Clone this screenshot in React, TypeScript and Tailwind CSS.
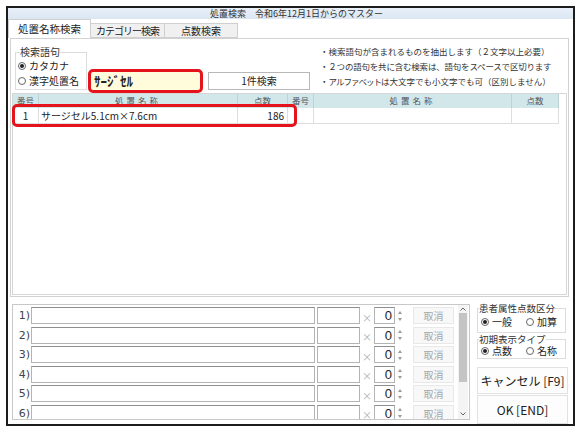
import React from 'react'

const jp = "font-['Noto_Sans_CJK_JP','Noto_Sans',sans-serif]"

function Radio({ checked, label }: { checked?: boolean; label: string }) {
  return (
    <span className="flex items-center gap-[3px]">
      <span className="w-[8px] h-[8px] rounded-full border border-[#666] bg-white flex items-center justify-center">
        {checked && <span className="w-[4px] h-[4px] rounded-full bg-[#222]" />}
      </span>
      <span>{label}</span>
    </span>
  )
}

function Spinner() {
  return (
    <div className="w-[10px] h-full flex flex-col items-center justify-center gap-[4px]">
      <svg width="4" height="3" viewBox="0 0 4 3"><path d="M0 3 L2 0 L4 3 Z" fill="#9a9a9a" /></svg>
      <svg width="4" height="3" viewBox="0 0 4 3"><path d="M0 0 L4 0 L2 3 Z" fill="#9a9a9a" /></svg>
    </div>
  )
}

function ListRow({ n }: { n: number }) {
  return (
    <div className="flex items-center h-[17px] shrink-0">
      <span className="w-[18px] text-right pr-[1px] text-[11px] leading-[17px] text-[#444] font-['DejaVu_Sans',sans-serif]">{n})</span>
      <div className="w-[284px] h-full border border-[#b4b4b4] border-t-[#8e8e8e] bg-white" />
      <div className="ml-[2px] w-[43px] h-full border border-[#b4b4b4] border-t-[#8e8e8e] bg-white" />
      <span className="w-[14px] text-center text-[10px] leading-[17px] text-[#b0b0b0] pt-[3px]">×</span>
      <div className="w-[21px] h-full border border-[#b4b4b4] border-t-[#8e8e8e] bg-white text-right pr-[2px] text-[13px] leading-[15px] text-[#222] font-['Liberation_Sans',sans-serif]">0</div>
      <Spinner />
      <div className="ml-[8px] w-[41px] h-full border border-[#e8e8e8] bg-[#f8f8f8] text-center text-[10px] leading-[15px] text-[#a8a8a8]">取消</div>
    </div>
  )
}

export default function App() {
  return (
    <div className={`w-[581px] h-[433px] bg-white pl-[6px] pt-[6px] ${jp}`}>
      <div className="w-[569px] h-[420px] border-2 border-[#1c1c1c] flex flex-col bg-white overflow-hidden">
        {/* title bar */}
        <div className="h-[11px] shrink-0 bg-gradient-to-b from-[#e9f0f9] to-[#dae6f2] text-center text-[9px] leading-[11px] text-[#333] pl-[12px]">
          処置検索　令和6年12月1日からのマスター
        </div>

        {/* tabs */}
        <div className="h-[19px] shrink-0 flex items-end bg-white">
          <div className="w-[83px] h-[19px] border border-b-0 border-[#cfcfcf] bg-white text-center text-[10.5px] leading-[18px] text-[#222]">処置名称検索</div>
          <div className="w-[74px] h-[15px] border border-l-0 border-[#cfcfcf] bg-[#f0f0f0] text-center text-[10px] leading-[14px] tracking-[-1px] text-[#222]">カテゴリー検索</div>
          <div className="w-[73px] h-[15px] border border-l-0 border-[#cfcfcf] bg-[#f0f0f0] text-center text-[10px] leading-[14px] text-[#222]">点数検索</div>
        </div>

        {/* tab panel */}
        <div className="ml-[2px] w-[559px] h-[259px] shrink-0 border border-[#d2d2d2] bg-white flex flex-col">
          <div className="h-[54px] shrink-0 flex items-start">
            <fieldset className="ml-[4px] mt-[7px] w-[72px] h-[44px] border border-[#dcdcdc] pl-[2px] text-[10px] text-[#222]">
              <legend className="leading-[12px] px-0 ml-[2px] text-[#333]">検索語句</legend>
              <div className="leading-[15px]"><Radio checked label="カタカナ" /></div>
              <div className="leading-[15px]"><Radio label="漢字処置名" /></div>
            </fieldset>
            <div className="ml-[1px] mt-[30px] w-[115px] h-[24px] border-[3px] border-[#e5141c] rounded-[5px] bg-[#fffcdc] pl-[3px] text-[13px] leading-[18px] font-bold text-[#222]">
              ｻｰｼﾞｾﾙ
            </div>
            <div className="ml-[5px] mt-[33px] w-[102px] h-[18px] border border-[#b8b8b8] bg-white text-center text-[10px] leading-[16px] text-[#222]">
              1件検索
            </div>
            <div className="ml-[10px] mt-[5px] text-[8.5px] leading-[15px] text-[#333] whitespace-nowrap">
              <div>・検索語句が含まれるものを抽出します（２文字以上必要）</div>
              <div className="tracking-[-0.2px]">・２つの語句を共に含む検索は、語句をスペースで区切ります</div>
              <div>・<span className="tracking-[-1px]">アルファベット</span>は大文字でも小文字でも可（区別しません）</div>
            </div>
          </div>

          {/* result table */}
          <div className="relative ml-[1px] mr-[1px] mb-[1px] flex-1 border border-[#d6d6d6] bg-white">
            <div className="flex h-[14px] text-[8.5px] leading-[13px] text-[#555]">
              <div className="w-[26px] bg-[#d2e7ea] border-r border-[#b9d3d6] text-center">番号</div>
              <div className="w-[199px] bg-[#d2e7ea] border-r border-[#b9d3d6] text-center tracking-[3px]">処置名称</div>
              <div className="w-[50px] bg-[#d2e7ea] border-r border-[#b9d3d6] text-center">点数</div>
              <div className="w-[26px] bg-[#d2e7ea] border-r border-[#b9d3d6] text-center">番号</div>
              <div className="w-[198px] bg-[#d2e7ea] border-r border-[#b9d3d6] text-center tracking-[3px]">処置名称</div>
              <div className="w-[47px] bg-[#d2e7ea] border-r border-[#b9d3d6] text-center">点数</div>
            </div>
            <div className="flex h-[16px] text-[10px] leading-[15px] text-[#222]">
              <div className="w-[26px] border-r border-b border-[#dedede] text-center">1</div>
              <div className="w-[199px] border-r border-b border-[#dedede] pl-[2px] whitespace-nowrap">サージセル5.1cm×7.6cm</div>
              <div className="w-[50px] border-r border-b border-[#dedede] text-right pr-[3px]">186</div>
              <div className="w-[26px] border-r border-b border-[#dedede]" />
              <div className="w-[198px] border-r border-b border-[#dedede]" />
              <div className="w-[47px] border-r border-b border-[#dedede]" />
            </div>
            <div className="absolute left-[-1px] top-[10px] w-[285px] h-[23px] border-[3px] border-[#e5141c] rounded-[5px]" />
          </div>
        </div>

        {/* bottom section */}
        <div className="flex-1 flex items-start">
          <div className="ml-[4px] mt-[7px] w-[458px] h-[116px] border border-[#c8c8c8] bg-white flex overflow-hidden">
            <div className="w-[443px] pt-[2px] flex flex-col gap-[2.5px] overflow-hidden">
              {[1, 2, 3, 4, 5, 6].map(n => <ListRow key={n} n={n} />)}
            </div>
            <div className="ml-[2px] w-[10px] h-full flex flex-col items-center bg-[#f4f4f4]">
              <div className="h-[8px] flex items-center justify-center">
                <svg width="6" height="4" viewBox="0 0 6 4"><path d="M0.5 3.5 L3 1 L5.5 3.5" fill="none" stroke="#666" strokeWidth="1" /></svg>
              </div>
              <div className="w-[8px] h-[69px] bg-[#c4c4c4]" />
              <div className="flex-1" />
              <div className="h-[10px] flex items-center justify-center">
                <svg width="6" height="4" viewBox="0 0 6 4"><path d="M0.5 0.5 L3 3 L5.5 0.5" fill="none" stroke="#666" strokeWidth="1" /></svg>
              </div>
            </div>
          </div>

          <div className="ml-[7px] mt-[6px] w-[91px] flex flex-col text-[10px] text-[#222]">
            <fieldset className="w-[89px] border border-[#dcdcdc] pl-[3px] pb-[4px]">
              <legend className="text-[9.5px] leading-[11px] ml-[-2px] px-0 text-[#333]">患者属性点数区分</legend>
              <div className="flex gap-[14px] leading-[13px] pt-[1px]"><Radio checked label="一般" /><Radio label="加算" /></div>
            </fieldset>
            <fieldset className="mt-[1px] w-[89px] border border-[#dcdcdc] pl-[3px] pb-[1px]">
              <legend className="text-[9.5px] leading-[11px] ml-[-2px] px-0 text-[#333]">初期表示タイプ</legend>
              <div className="flex gap-[14px] leading-[12px]"><Radio checked label="点数" /><Radio label="名称" /></div>
            </fieldset>
            <div className="mt-[8px] h-[27px] border border-[#e2e2e2] bg-[#fdfdfd] text-center text-[12px] leading-[25px] text-[#222]">キャンセル [F9]</div>
            <div className="mt-[1px] h-[29px] border border-[#e2e2e2] bg-[#fdfdfd] text-center text-[12px] leading-[27px] text-[#222]">OK [END]</div>
          </div>
        </div>
      </div>
    </div>
  )
}
